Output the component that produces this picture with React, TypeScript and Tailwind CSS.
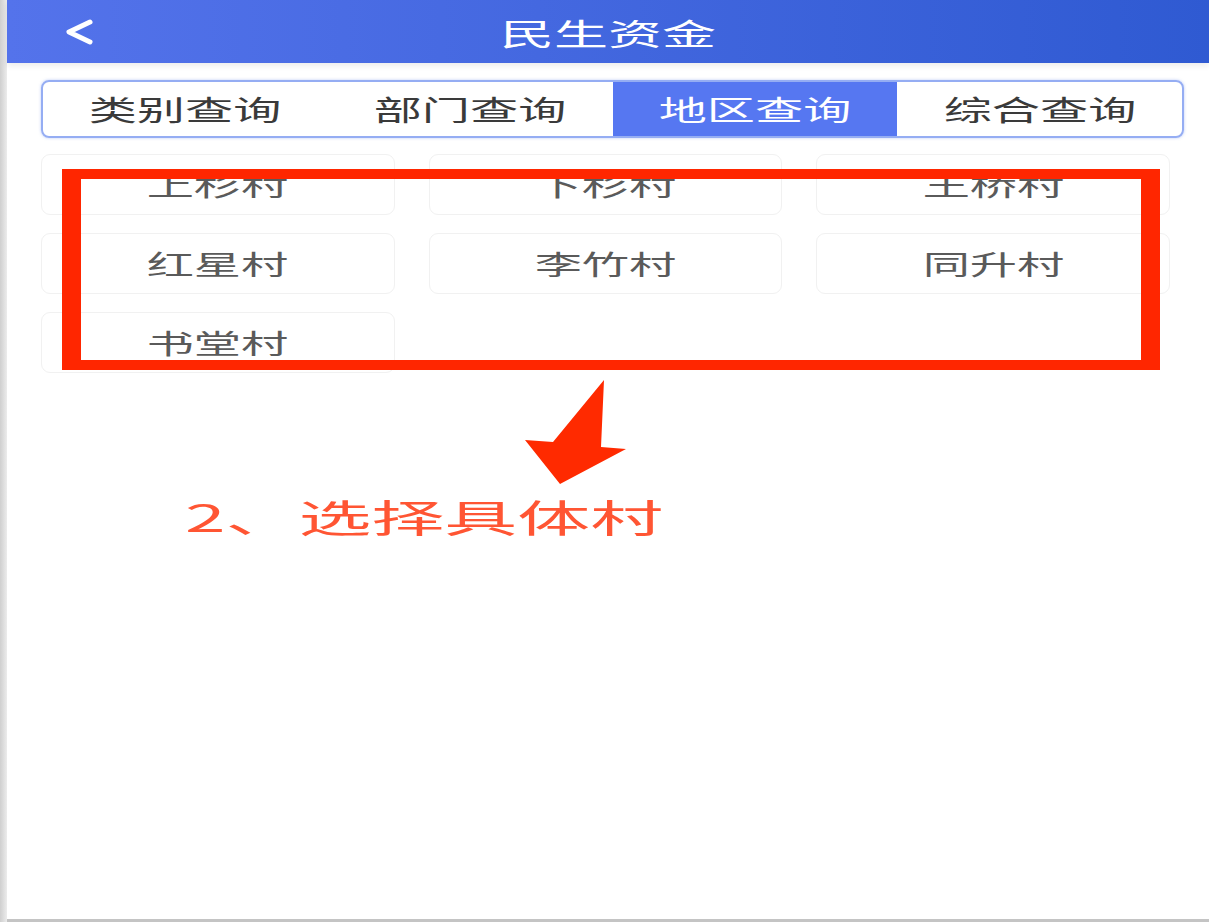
const tabs = ["类别查询", "部门查询", "地区查询", "综合查询"];
const villages = ["上杉村", "下杉村", "王桥村", "红星村", "李竹村", "同升村", "书堂村"];

const cjk = { fontFamily: '"Noto Sans CJK SC", "Noto Sans", sans-serif' };

function BackIcon() {
  return (
    <svg width="34" height="28" viewBox="0 0 34 28" fill="none">
      <path d="M28 4 L7 14 L28 24" stroke="white" strokeWidth="5" strokeLinecap="round" strokeLinejoin="round" />
    </svg>
  );
}

export default function App() {
  return (
    <div className="relative flex h-[922px] w-full overflow-hidden bg-white" style={cjk}>
      {/* left edge of the phone frame */}
      <div className="w-[7px] shrink-0 bg-gradient-to-r from-[#cfcfcf] to-[#ececec]" />

      <div className="flex flex-1 flex-col border-b-[3px] border-[#c4c4c4]">
        <header className="grid h-[63px] shrink-0 grid-cols-[1fr_auto_1fr] items-center bg-gradient-to-r from-[#5473eb] to-[#2f5ad2] shadow-[0_3px_6px_rgba(0,0,0,0.08)]">
          <div className="pl-[55px]">
            <BackIcon />
          </div>
          <div className="text-[30px] leading-none text-white">
            <span className="inline-block scale-x-[1.8]">民生资金</span>
          </div>
          <div />
        </header>

        <div className="pl-[34px] pr-[25px]">
          <div className="mt-[17px] grid h-[58px] grid-cols-4 overflow-hidden rounded-[8px] border-2 border-[#95adf3] shadow-[0_0_3px_rgba(120,150,240,0.5)]">
            {tabs.map((t, i) => (
              <div
                key={t}
                className={
                  "flex items-center justify-center text-[28px] leading-none " +
                  (i === 2 ? "bg-[#5677f1] text-white" : "text-[#3a3a3a]")
                }
              >
                <span className="inline-block scale-x-[1.72]">{t}</span>
              </div>
            ))}
          </div>

          <div className="mt-[16px] grid grid-cols-3 gap-x-[34px] gap-y-[18px] pr-[14px]">
            {villages.map((v) => (
              <div
                key={v}
                className="flex h-[61px] items-center justify-center rounded-[9px] border border-[#f1f1f1] text-[27px] leading-none text-[#5a5a5a]"
              >
                <span className="inline-block scale-x-[1.75]">{v}</span>
              </div>
            ))}
          </div>
        </div>
      </div>

      {/* annotation overlay */}
      <div className="pointer-events-none absolute left-[62px] top-[169px] h-[201px] w-[1098px] border-x-[19px] border-y-[10px] border-[#ff2600]" />
      <svg className="pointer-events-none absolute left-[520px] top-[375px]" width="112" height="115" viewBox="0 0 112 115">
        <polygon points="84,5 81,72 106,74 40,109 5,65 33,67" fill="#ff2a00" />
      </svg>
      <div className="pointer-events-none absolute left-[185px] top-[497px] text-[38px] leading-none text-[#ff5533]">
        <span className="inline-block origin-left scale-x-[1.92]">2、选择具体村</span>
      </div>
    </div>
  );
}
